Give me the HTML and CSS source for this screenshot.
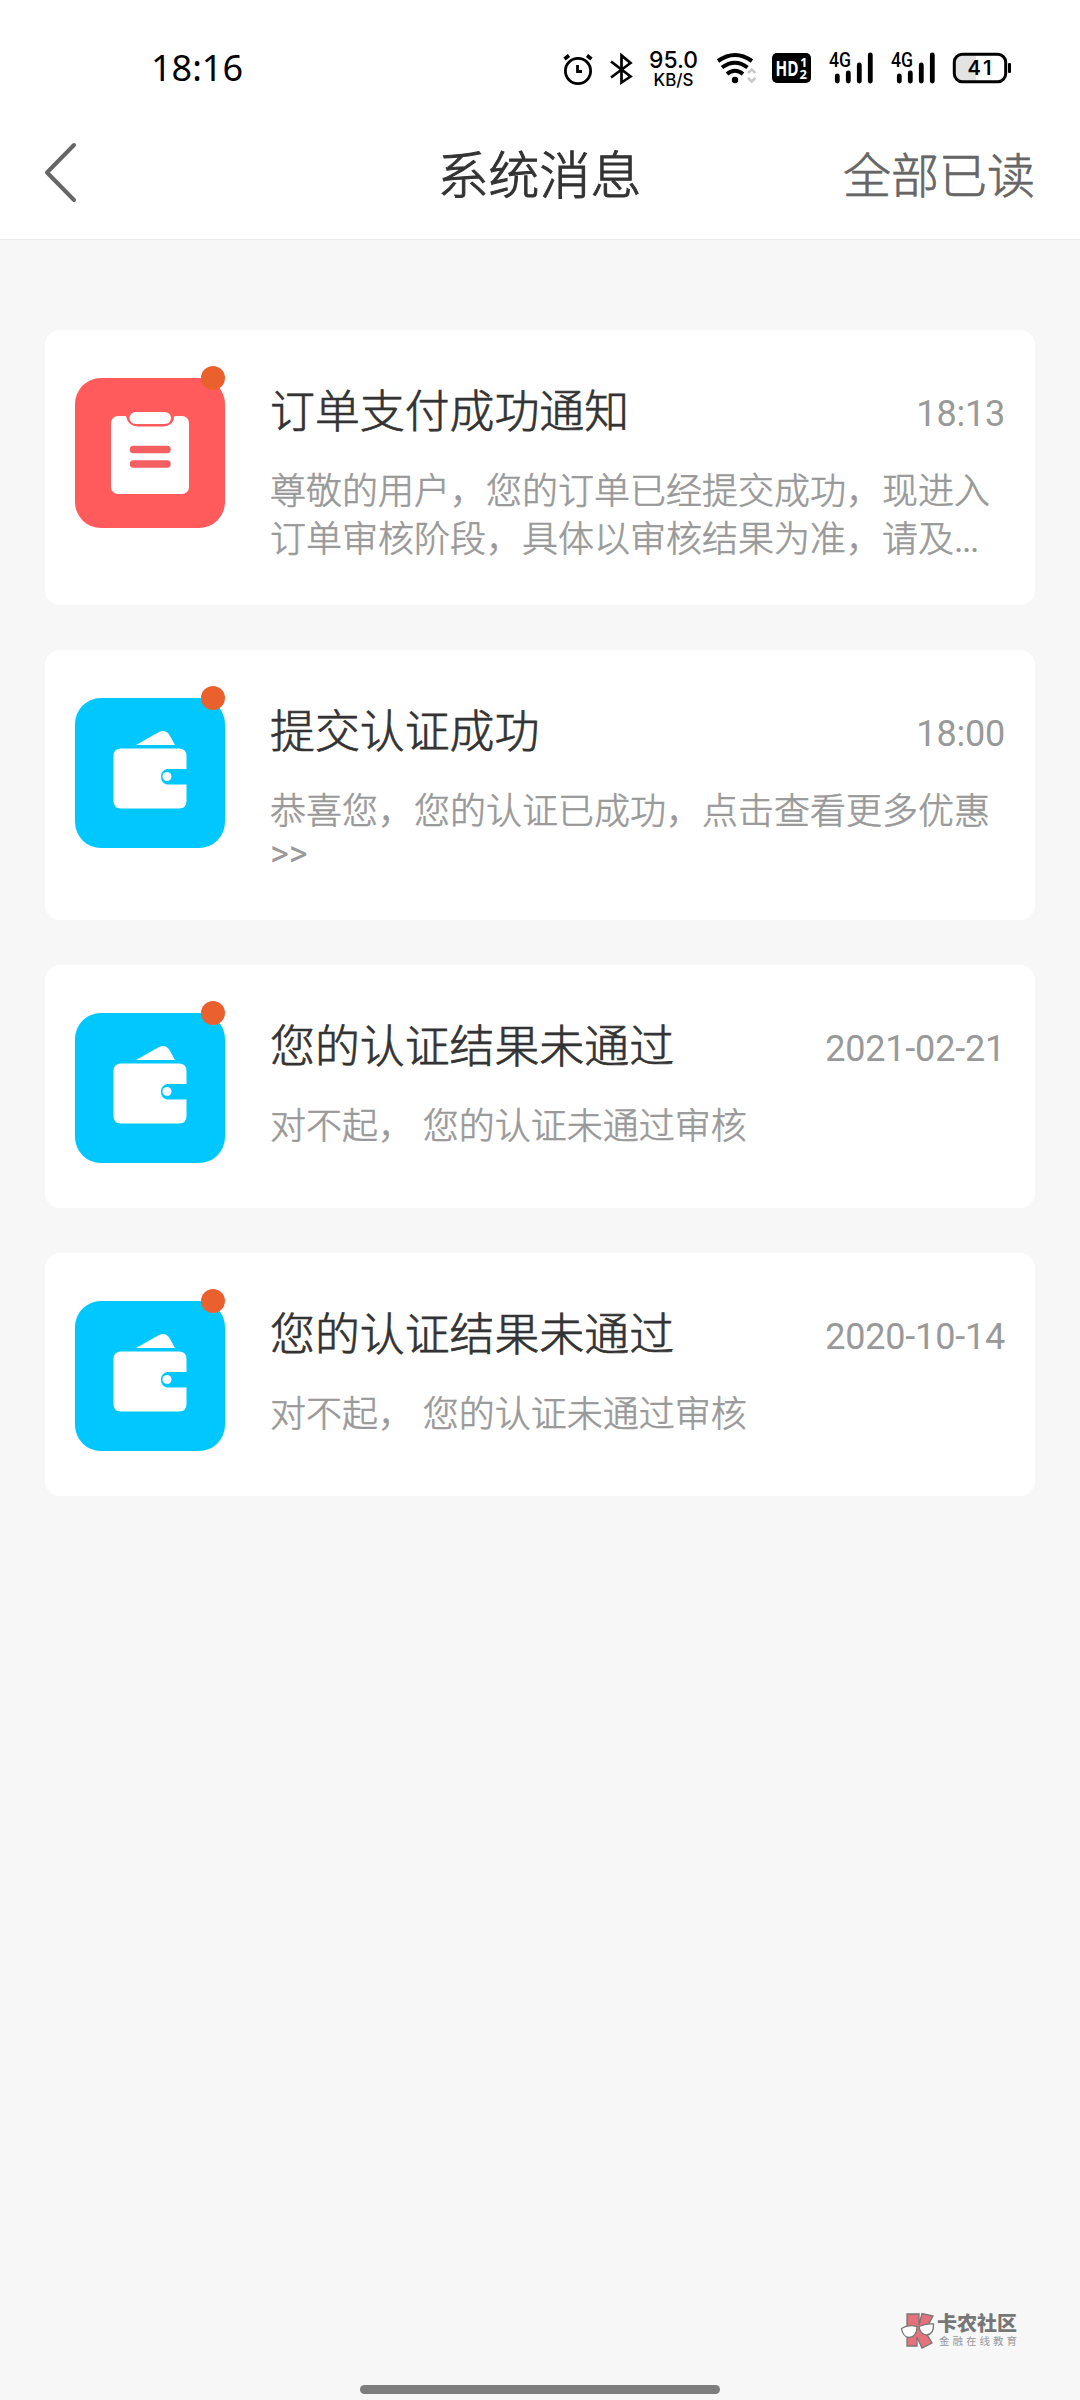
FILE: index.html
```html
<!DOCTYPE html>
<html lang="zh-CN">
<head>
<meta charset="utf-8">
<title>系统消息</title>
<link rel="stylesheet" href="styles.css">
</head>
<body>
<svg width="0" height="0" class="defs">
  <symbol id="wallet" viewBox="0 0 150 150">
    <path d="M61 47 L84 34 Q91 31 95 38 L100 47 Z"/>
    <path d="M46 50.500H104Q111.500 50.500 111.500 58V71H92A8 8 0 0 0 92 86.500H111.500V103Q111.500 110.500 104 110.500H46Q38.500 110.500 38.500 103V58Q38.500 50.500 46 50.500Z"/>
    <circle cx="92" cy="78.500" r="4.500"/>
  </symbol>
</svg>
<div class="status">
  <div class="clock">18:16</div>
  <svg class="s-icons" width="482" height="60" viewBox="540 40 482 60">
    <g fill="none" stroke="#000">
      <circle cx="578" cy="71" r="12.600" stroke-width="2.800"/>
      <path d="M577.500 65V71.500H582" stroke-width="2.800"/>
      <path d="M564.500 59L569 55.500M591.500 59L587 55.500" stroke-width="3.500"/>
      <path d="M611 61.500L630.500 76.500L621.500 82.500V55.500L630.500 63L611 77.500" stroke-width="2.700"/>
      <path d="M718 61Q735 49 752 61" stroke-width="4"/>
      <path d="M722 67.500Q735 58 747.500 67.500" stroke-width="4"/>
      <path d="M727 74Q735 67.500 743 74" stroke-width="4"/>
      <path d="M748 73L751.700 69.500L755.400 73M748 78L751.700 81.500L755.400 78" stroke="#c9c9c9" stroke-width="2.500"/>
    </g>
    <circle cx="735" cy="80" r="3.200"/>
    <g class="net"><text x="673.500" y="67.500" font-size="23.500" text-anchor="middle" textLength="49" lengthAdjust="spacingAndGlyphs">95.0</text>
    <text x="673.500" y="85.500" font-size="17" text-anchor="middle" textLength="40" lengthAdjust="spacingAndGlyphs">KB/S</text></g>
    <rect x="772" y="53" width="39" height="30" rx="5"/>
    <g class="hd"><text x="775.500" y="76" font-size="21" textLength="23" lengthAdjust="spacingAndGlyphs">HD</text>
    <text x="800" y="66.500" font-size="13">1</text><text x="799.500" y="78.500" font-size="13">2</text></g>
    <g id="sig">
      <text class="g4" x="829" y="67" font-size="19.500" textLength="22" lengthAdjust="spacingAndGlyphs">4G</text>
      <path d="M837.300 76V81M848.300 73V81M859.300 65V81M870.300 55V81" stroke="#000" stroke-width="4.800" stroke-linecap="round"/>
    </g>
    <use href="#sig" x="62"/>
    <path d="M976 55V81H963Q955 81 955 73V63Q955 55 963 55Z" fill="#e3e3e3"/>
    <rect x="954.300" y="54.300" width="51.400" height="27.400" rx="8" fill="none" stroke="#000" stroke-width="3"/>
    <rect x="1008" y="63" width="3" height="10" rx="1"/>
    <text class="batt" x="979.500" y="75" font-size="20" text-anchor="middle" textLength="24" lengthAdjust="spacing">41</text>
  </svg>
</div>
<header class="nav">
  <svg class="back" width="34" height="64" viewBox="0 0 34 64"><path d="M30 4L3 31.500L30 59" fill="none" stroke="#666" stroke-width="4" stroke-linecap="round" stroke-linejoin="round"/></svg>
  <h1 class="nav-title">系统消息</h1>
  <div class="read-all">全部已读</div>
</header>
<main class="list">
  <section class="card order">
    <div class="icon red"><svg width="150" height="150" viewBox="0 0 150 150">
      <rect x="36" y="38" width="78" height="78" rx="7" fill="#fff"/>
      <path d="M51 36V38Q53 48.500 63 48.500H88Q98 48.500 99.500 38V36Z" fill="#ff5b5d"/>
      <rect x="54.500" y="34" width="41.500" height="12" rx="6" fill="#fff"/>
      <path d="M58.500 71.500H92M58.500 86H92" stroke="#f45f62" stroke-width="7.500" stroke-linecap="round"/>
    </svg><i class="dot"></i></div>
    <div class="body"><div class="head"><h2>订单支付成功通知</h2><time>18:13</time></div>
    <p>尊敬的用户，您的订单已经提交成功，现进入<br>订单审核阶段，具体以审核结果为准，请及<span class="more">...</span></p></div>
  </section>
  <section class="card success">
    <div class="icon"><svg width="150" height="150"><use href="#wallet"/></svg><i class="dot"></i></div>
    <div class="body"><div class="head"><h2>提交认证成功</h2><time>18:00</time></div>
    <p>恭喜您，您的认证已成功，点击查看更多优惠<span class="latin">&gt;&gt;</span></p></div>
  </section>
  <section class="card">
    <div class="icon"><svg width="150" height="150"><use href="#wallet"/></svg><i class="dot"></i></div>
    <div class="body"><div class="head"><h2>您的认证结果未通过</h2><time>2021-02-21</time></div>
    <p>对不起， 您的认证未通过审核</p></div>
  </section>
  <section class="card">
    <div class="icon"><svg width="150" height="150"><use href="#wallet"/></svg><i class="dot"></i></div>
    <div class="body"><div class="head"><h2>您的认证结果未通过</h2><time>2020-10-14</time></div>
    <p>对不起， 您的认证未通过审核</p></div>
  </section>
</main>
<footer class="foot">
  <div class="brand">
    <svg width="36" height="38" viewBox="0 0 36 38">
      <path d="M7 2H19V13L22 1.500L33 4L25 19L32 31L22 36L17 25V34H7Z" fill="#e5717c" stroke="#777" stroke-width="1.300"/>
      <path d="M1.500 16.500Q8 12 17 14.500Q17 25 9 25.500Q3 25 1.500 16.500ZM19 14.500Q26 11 33.500 12Q34 22 27 23Q20 22.500 19 14.500Z" fill="#fff" stroke="#777" stroke-width="1.300"/>
    </svg>
    <div class="brand-text"><b>卡农社区</b><span>金融在线教育</span></div>
  </div>
  <div class="home"></div>
</footer>
</body>
</html>
```
FILE: styles.css
```css
* { box-sizing: border-box; margin: 0; padding: 0; }
body {
  width: 1080px; height: 2400px;
  display: flex; flex-direction: column;
  background: #f7f7f7; color: #333;
  font-family: Roboto, "Noto Sans CJK SC", sans-serif;
  font-weight: 400;
  overflow: hidden;
}
.defs { display: none; }
.status {
  height: 110px; background: #fff;
  display: flex; justify-content: space-between; align-items: flex-start;
  padding: 40px 58px 0 151px;
}
.clock { font: 36px/56px "Noto Sans", sans-serif; color: #000; }
.s-icons { display: block; }
.net { font-family: Inter, sans-serif; font-weight: 500; }
.hd { font-family: "Open Sans", sans-serif; font-weight: 700; fill: #fff; }
.g4 { font-family: Roboto, sans-serif; font-weight: 500; }
.batt { font-family: Inter, sans-serif; font-weight: 600; }
.nav {
  height: 130px; background: #fff; border-bottom: 1px solid #ececec;
  display: grid; grid-template-columns: 1fr auto 1fr; align-items: center;
  padding: 4px 45px 0 44px;
}
.back { display: block; margin-bottom: 7px; }
.nav-title { font-size: 51px; font-weight: 300; line-height: 74px; -webkit-text-stroke: 1px; }
.read-all { justify-self: end; font-size: 48px; line-height: 70px; color: #666; font-weight: 300; -webkit-text-stroke: 0.7px; }
.list { display: flex; flex-direction: column; gap: 45px; padding: 90px 45px 0; }
.card { height: 243px; display: flex; gap: 45px; padding: 48px 30px 0; background: #fff; border-radius: 15px; }
.order { height: 275px; }
.success { height: 270px; }
.icon { position: relative; width: 150px; height: 150px; flex: none; border-radius: 26px; background: #00c8ff; fill: #fff; }
.icon svg { display: block; }
.red { background: #ff5b5d; }
.dot { position: absolute; right: 0; top: -12px; width: 24px; height: 24px; border-radius: 50%; background: #eb612d; }
.body { flex: 1; min-width: 0; }
.head { display: flex; justify-content: space-between; height: 66px; }
h2 { font-size: 44.900px; line-height: 70px; font-weight: 300; -webkit-text-stroke: 0.7px; }
time { font-size: 36px; line-height: 72px; color: #999; letter-spacing: -0.2px; }
p { margin-top: 24px; font-size: 36px; line-height: 48px; color: #999; font-weight: 300; white-space: nowrap; -webkit-text-stroke: 0.6px; }
.more { font-weight: 400; letter-spacing: -1.5px; -webkit-text-stroke: 0; }
.latin { display: block; font-weight: 400; line-height: 36px; -webkit-text-stroke: 0; }
.foot { margin-top: auto; height: 88px; display: flex; flex-direction: column; align-items: center; justify-content: space-between; padding-bottom: 6px; }
.brand { align-self: flex-end; display: flex; gap: 1px; margin-right: 61px; }
.brand-text { display: flex; flex-direction: column; color: #777; width: 82px; padding-top: 1px; white-space: nowrap; }
.brand-text b { font-size: 20px; line-height: 23px; font-weight: 900; }
.brand-text span { font-size: 10.500px; line-height: 12px; letter-spacing: 3px; padding-left: 2px; color: #999; }
.home { width: 360px; height: 9px; border-radius: 5px; background: #7d7d7d; }
```
